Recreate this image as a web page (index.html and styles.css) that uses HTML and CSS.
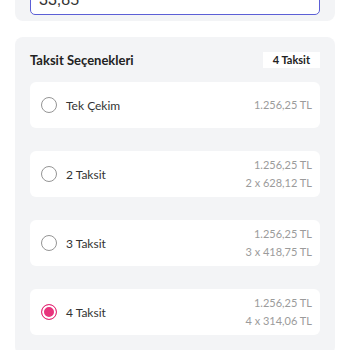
FILE: index.html
```html
<!DOCTYPE html>
<html lang="tr">
<head>
    <meta charset="UTF-8">
    <meta name="viewport" content="width=device-width, initial-scale=1.0">
    <title>Taksit Seçenekleri</title>
    <link rel="stylesheet" href="styles.css">
</head>
<body>

<div class="page">
    <div class="card amount-card">
        <input type="text" class="amount-input" value="33,85">
    </div>

    <div class="card installment-card">
        <div class="card-header">
            <h3>Taksit Seçenekleri</h3>
            <span class="badge">4 Taksit</span>
        </div>

        <div class="option-list">
            <label class="option">
                <span class="radio"></span>
                <span class="option-name">Tek Çekim</span>
                <span class="option-price">1.256,25 TL</span>
            </label>
            <label class="option">
                <span class="radio"></span>
                <span class="option-name">2 Taksit</span>
                <span class="option-price">1.256,25 TL<br>2 x 628,12 TL</span>
            </label>
            <label class="option">
                <span class="radio"></span>
                <span class="option-name">3 Taksit</span>
                <span class="option-price">1.256,25 TL<br>3 x 418,75 TL</span>
            </label>
            <label class="option selected">
                <span class="radio"></span>
                <span class="option-name">4 Taksit</span>
                <span class="option-price">1.256,25 TL<br>4 x 314,06 TL</span>
            </label>
        </div>
    </div>
</div>

</body>
</html>
```

FILE: styles.css
```css
body {
    margin: 0;
    background-color: #fff;
    font-family: Lato, "Noto Sans", sans-serif;
    color: #333;
}
.page {
    padding: 0 15px;
}
.card {
    background-color: #f3f4f6;
    border-radius: 8px;
}
.amount-card {
    margin-top: -38px;
    padding: 15px 15px 6px;
}
.amount-input {
    display: block;
    box-sizing: border-box;
    width: 100%;
    padding: 12px 8px 4px;
    font-family: "Liberation Sans", Arial, sans-serif;
    font-size: 16px;
    line-height: 20px;
    color: #333;
    background-color: #fff;
    border: 1.5px solid #5c5fd6;
    border-radius: 5px;
    outline: none;
}
.installment-card {
    margin-top: 16px;
    padding: 15px 15px 20px;
}
.card-header {
    display: flex;
    justify-content: space-between;
    align-items: center;
    height: 16px;
}
.card-header h3 {
    margin: 0;
    font-size: 13px;
    font-weight: bold;
    color: #222;
}
.badge {
    padding: 1px 10px;
    font-size: 11px;
    line-height: 14px;
    font-weight: bold;
    color: #222;
    background-color: #fff;
}
.option-list {
    display: flex;
    flex-direction: column;
    gap: 23px;
    margin-top: 14px;
}
.option {
    display: flex;
    align-items: center;
    box-sizing: border-box;
    height: 46px;
    padding: 0 8px 0 11px;
    background-color: #fff;
    border-radius: 6px;
    cursor: pointer;
}
.radio {
    box-sizing: border-box;
    width: 16px;
    height: 16px;
    border: 1.5px solid #959595;
    border-radius: 50%;
    flex-shrink: 0;
}
.option.selected .radio {
    border-color: #e5307a;
    background-color: #e8337c;
    box-shadow: inset 0 0 0 2px #fff;
}
.option-name {
    margin-left: 9px;
    font-size: 12px;
    color: #333;
}
.option-price {
    margin-left: auto;
    text-align: right;
    font-size: 11px;
    line-height: 18px;
    color: #9b9b9b;
}
```
